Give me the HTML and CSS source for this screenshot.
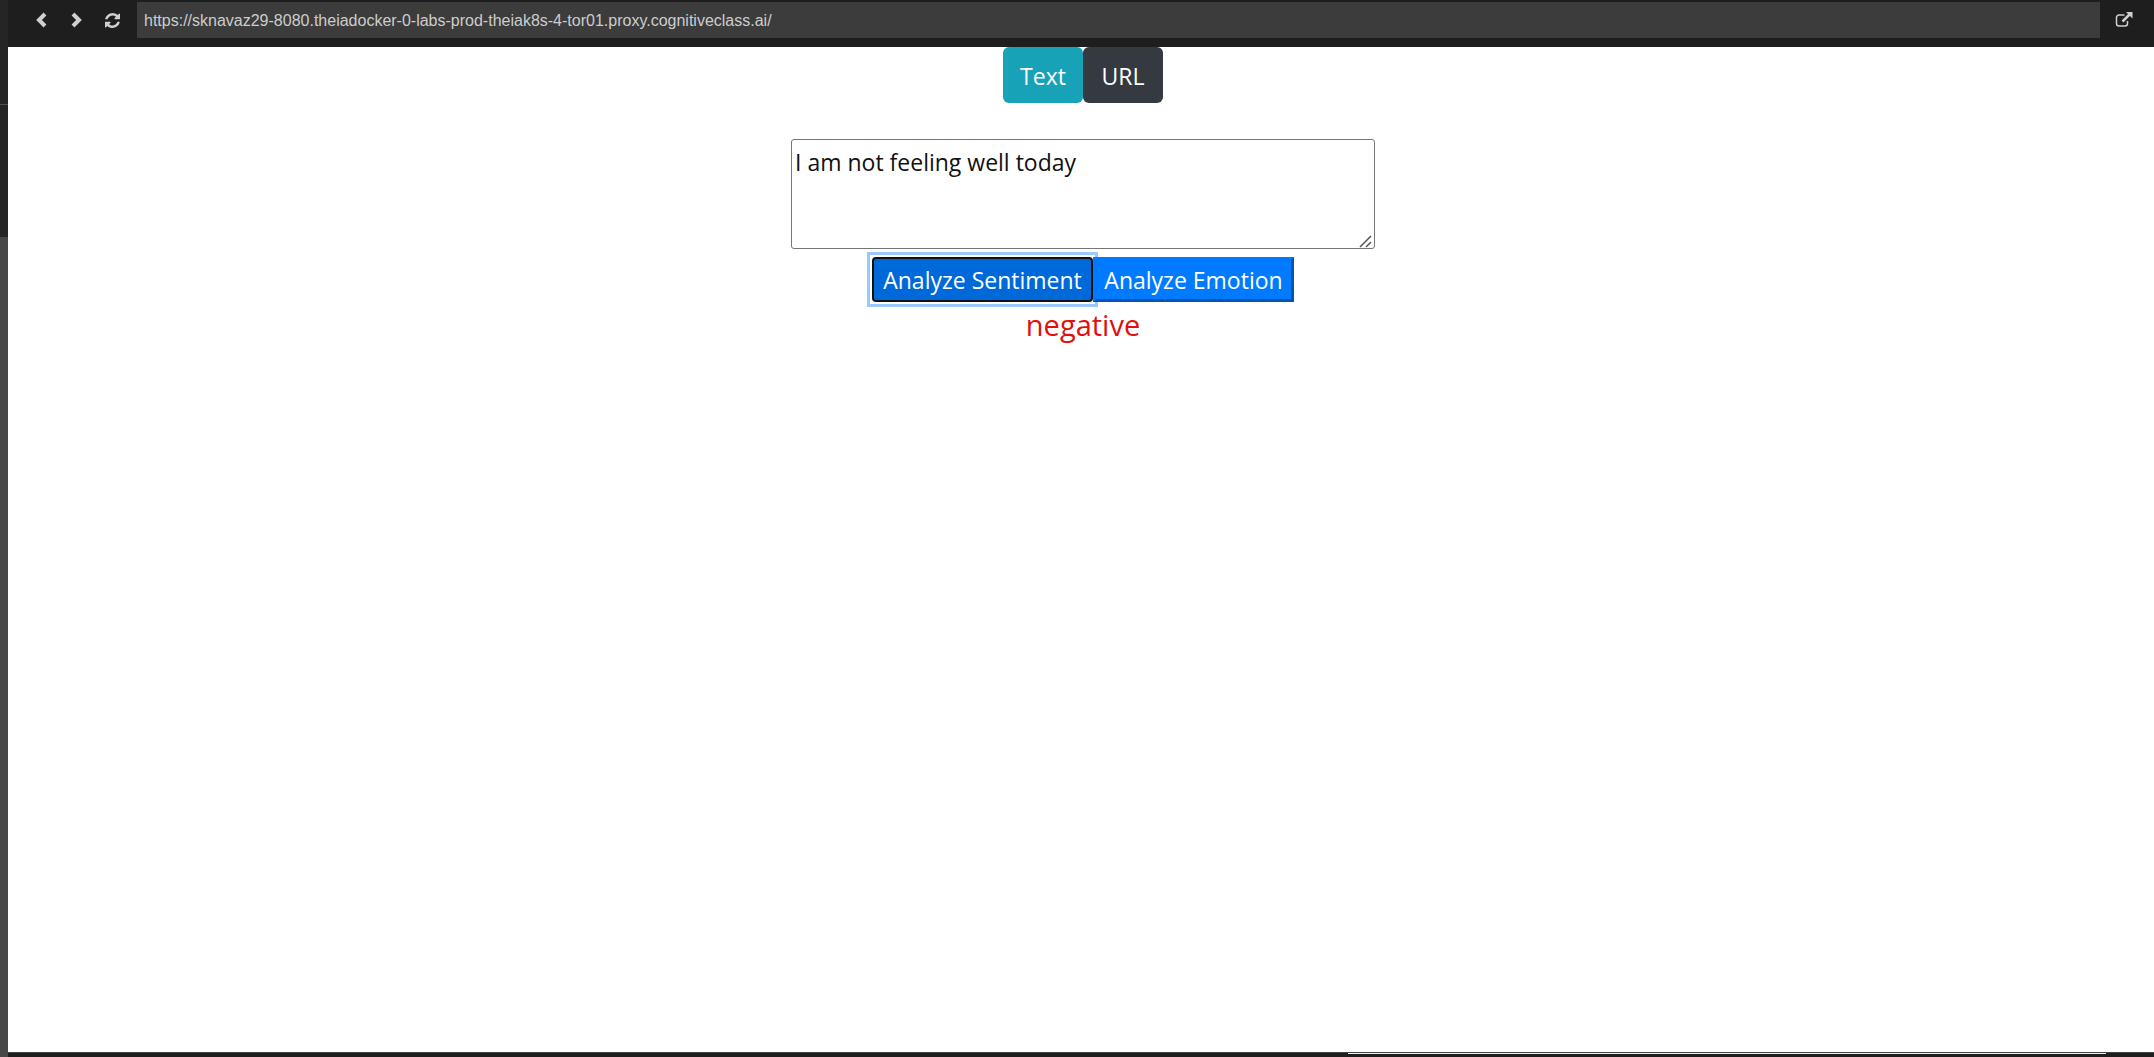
FILE: index.html
```html
<!DOCTYPE html>
<html lang="en">
<head>
<meta charset="utf-8">
<meta name="viewport" content="width=device-width, initial-scale=1">
<title>Sentiment Analyzer</title>
<link rel="stylesheet" href="styles.css">
</head>
<body>
<div class="workbench">
  <aside class="rail">
    <div class="rail-top"></div>
    <div class="rail-mid"></div>
  </aside>
  <div class="preview">
    <header class="toolbar">
      <nav class="nav">
        <button class="icon-button" type="button" aria-label="Back">
          <svg width="16" height="20" viewBox="0 0 16 20"><path d="M12 4 6 10l6 6" fill="none" stroke="currentColor" stroke-width="4"/></svg>
        </button>
        <button class="icon-button" type="button" aria-label="Forward">
          <svg width="16" height="20" viewBox="0 0 16 20"><path d="m4 4 6 6-6 6" fill="none" stroke="currentColor" stroke-width="4"/></svg>
        </button>
        <button class="icon-button" type="button" aria-label="Reload">
          <svg width="15" height="15" viewBox="0 0 1536 1536"><path fill="currentColor" d="M1511 928q0 5-1 7-64 268-268 434.500T764 1536q-146 0-282.500-55T238 1324l-129 129q-19 19-45 19t-45-19-19-45V960q0-26 19-45t45-19h448q26 0 45 19t19 45-19 45l-137 137q71 66 161 102t187 36q134 0 250-65t186-179q11-17 53-117 8-23 30-23h192q13 0 22.500 9.500t9.500 22.500zm25-800v448q0 26-19 45t-45 19h-448q-26 0-45-19t-19-45 19-45l138-138Q969 256 768 256q-134 0-250 65T332 500q-11 17-53 117-8 23-30 23H50q-13 0-22.500-9.500T18 608v-7q65-268 270-434.500T768 0q146 0 284 55.500T1297 212l130-129q19-19 45-19t45 19 19 45z"/></svg>
        </button>
      </nav>
      <input class="address" type="text" aria-label="Address" value="https://sknavaz29-8080.theiadocker-0-labs-prod-theiak8s-4-tor01.proxy.cognitiveclass.ai/">
      <button class="icon-button open-button" type="button" aria-label="Open in new window">
        <svg width="18" height="16" viewBox="0 0 18 16"><path d="M9.500 3H4a2.500 2.500 0 0 0-2.500 2.500v6A2.500 2.500 0 0 0 4 14h6a2.500 2.500 0 0 0 2.500-2.500V9" fill="none" stroke="currentColor" stroke-width="1.500"/><path d="m7.500 9.500 7-7" fill="none" stroke="currentColor" stroke-width="2.500"/><path d="M11 0h6.500v6.500z" fill="currentColor"/></svg>
      </button>
    </header>
    <main class="page">
      <div class="modes">
        <button class="mode mode-text" type="button">Text</button>
        <button class="mode mode-url" type="button">URL</button>
      </div>
      <div class="entry-box">
        <textarea class="entry" aria-label="Text to analyze">I am not feeling well today</textarea>
        <svg class="grip" width="14" height="14" viewBox="0 0 14 14" aria-hidden="true"><path d="M1 13 12 2M7 13l5-5" fill="none" stroke="#555" stroke-width="1.500"/></svg>
      </div>
      <div class="actions">
        <button class="action action-active" type="button">Analyze Sentiment</button>
        <button class="action action-next" type="button">Analyze Emotion</button>
      </div>
      <output class="result">negative</output>
    </main>
    <footer class="panel-edge"><div class="panel-line"></div></footer>
  </div>
</div>
</body>
</html>
```
FILE: styles.css
```css
* {
  box-sizing: border-box;
}

body {
  margin: 0;
  background: #fff;
  font-family: "Open Sans", "Noto Sans", sans-serif;
}

.workbench {
  display: flex;
  min-height: 100vh;
}

.rail {
  flex: 0 0 8px;
  background: #474748;
}

.rail-top {
  height: 105px;
  background: #252526;
  border-bottom: 1px solid #505051;
}

.rail-mid {
  height: 132px;
  background: #252526;
}

.preview {
  flex: 1;
  min-width: 0;
  display: flex;
  flex-direction: column;
}

.toolbar {
  display: flex;
  align-items: center;
  height: 47px;
  padding: 2px 0 9px 25px;
  background: #1e1e1e;
}

.nav {
  display: flex;
  align-items: center;
  gap: 20px;
  padding-right: 17px;
}

.icon-button {
  display: flex;
  align-items: center;
  padding: 0;
  border: 0;
  background: none;
  color: #d0d0d0;
}

.address {
  flex: 1;
  min-width: 0;
  height: 36px;
  padding: 1px 7px 0;
  border: 0;
  background: #3c3c3c;
  color: #ccc;
  font-family: "Liberation Sans", Arial, sans-serif;
  font-size: 16px;
}

.open-button {
  margin: 0 21px 0 15px;
}

.page {
  flex: 1;
  display: flex;
  flex-direction: column;
  align-items: center;
  padding-left: 4px;
}

.modes,
.actions {
  display: flex;
}

.mode {
  width: 80px;
  height: 56px;
  padding: 2px 0 0;
  border: 0;
  border-radius: 6px;
  color: #fff;
  font-family: inherit;
  font-size: 23px;
}

.mode-text {
  background: #17a2b8;
}

.mode-url {
  background: #343a40;
}

.entry-box {
  position: relative;
  width: 584px;
  max-width: 100%;
  margin: 36px 0 8px;
}

.entry {
  display: block;
  width: 100%;
  height: 110px;
  padding: 5px 3px;
  border: 1px solid #767676;
  border-radius: 3px;
  color: #111;
  font-family: inherit;
  font-size: 23px;
  line-height: 34px;
  resize: none;
}

.grip {
  position: absolute;
  right: 2px;
  bottom: 1px;
}

.action {
  position: relative;
  height: 45px;
  padding: 0;
  color: #fff;
  font-family: inherit;
  font-size: 23px;
}

.action-active {
  width: 221px;
  border: 2px solid #101010;
  border-radius: 4px;
  background: #0069d9;
  box-shadow: 0 0 0 2px #fff;
}

.action-active::after {
  content: "";
  position: absolute;
  inset: -7px;
  border: 3px solid #99caff;
  pointer-events: none;
}

.action-next {
  z-index: 1;
  width: 201px;
  border: 3px solid #007bff;
  border-right-color: #0056b3;
  border-bottom-color: #0056b3;
  background: #007bff;
}

.result {
  color: #e01010;
  font-size: 29px;
  line-height: 46px;
}

.panel-edge {
  height: 5px;
  border-top: 1px solid #444;
  background: #1e1e1e;
}

.panel-line {
  width: 758px;
  max-width: 90%;
  height: 1px;
  margin-left: auto;
  margin-right: 48px;
  background: #f0f0f0;
}
```
